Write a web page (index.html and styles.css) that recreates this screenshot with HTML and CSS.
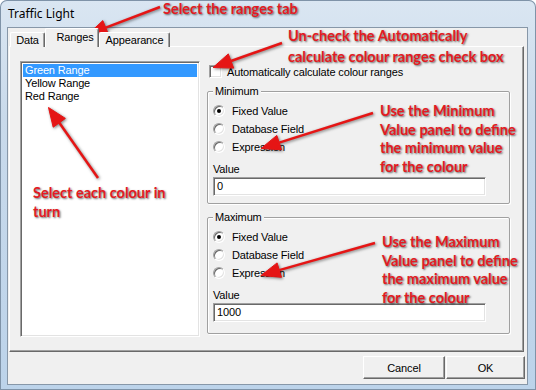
FILE: index.html
```html
<!DOCTYPE html>
<html lang="en">
<head>
    <meta charset="UTF-8">
    <title>Traffic Light</title>
    <link rel="stylesheet" href="styles.css">
</head>
<body>

    <div class="window">
        <div class="titlebar">Traffic Light</div>

        <div class="client">
            <!-- Tab strip -->
            <div class="tabs">
                <span class="tab tab-data">Data</span>
                <span class="tab tab-active">Ranges</span>
                <span class="tab tab-appearance">Appearance</span>
            </div>

            <div class="panel">
                <ul class="listbox">
                    <li class="selected">Green Range</li>
                    <li>Yellow Range</li>
                    <li>Red Range</li>
                </ul>

                <div class="settings">
                    <label class="check-row"><span class="checkbox"></span>Automatically calculate colour ranges</label>

                    <fieldset class="group">
                        <legend>Minimum</legend>
                        <div class="radio-row"><span class="radio checked"></span>Fixed Value</div>
                        <div class="radio-row"><span class="radio"></span>Database Field</div>
                        <div class="radio-row"><span class="radio"></span>Expression</div>
                        <div class="field-label">Value</div>
                        <div class="textbox">0</div>
                    </fieldset>

                    <fieldset class="group group-grow">
                        <legend>Maximum</legend>
                        <div class="radio-row"><span class="radio checked"></span>Fixed Value</div>
                        <div class="radio-row"><span class="radio"></span>Database Field</div>
                        <div class="radio-row"><span class="radio"></span>Expression</div>
                        <div class="field-label">Value</div>
                        <div class="textbox">1000</div>
                    </fieldset>
                </div>
            </div>

            <div class="buttons">
                <button class="btn btn-cancel">Cancel</button>
                <button class="btn btn-ok">OK</button>
            </div>
        </div>

        <!-- Callout arrows drawn over the dialog -->
        <svg class="arrows" width="536" height="390" viewBox="0 0 536 390">
            <g fill="#e51515" stroke="#e51515">
                <line x1="160" y1="7" x2="105.8" y2="27.6" stroke-width="2.5"/>
                <polygon points="88,34.5 102.8,20.6 108.6,34.6" stroke-width="1"/>

                <line x1="282" y1="43" x2="231" y2="61" stroke-width="2.5"/>
                <polygon points="213,67.5 228.3,53.9 233.7,68.1" stroke-width="1"/>

                <line x1="373" y1="113" x2="279.2" y2="142.6" stroke-width="2.5"/>
                <polygon points="261,148.5 276.8,135.4 281.6,149.8" stroke-width="1"/>

                <line x1="375" y1="243" x2="279.3" y2="270.1" stroke-width="2.5"/>
                <polygon points="261,275.5 277.1,262.9 281.5,277.3" stroke-width="1"/>

                <line x1="98" y1="178" x2="59.3" y2="122.8" stroke-width="2.5"/>
                <polygon points="48.5,107.5 65.4,118.4 53.2,127.2" stroke-width="1"/>
            </g>
        </svg>

        <div class="note note-tab">Select the ranges tab</div>
        <div class="note note-check">Un-check the Automatically<br>calculate colour ranges check box</div>
        <div class="note note-min">Use the Minimum<br>Value panel to define<br>the minimum value<br>for the colour</div>
        <div class="note note-max">Use the Maximum<br>Value panel to define<br>the maximum value<br>for the colour</div>
        <div class="note note-list">Select each colour in<br>turn</div>
    </div>

</body>
</html>
```

FILE: styles.css
```css
body {
    margin: 0;
    background-color: #ffffff;
    font-family: 'Liberation Sans', Arial, sans-serif;
    font-size: 11px;
    letter-spacing: -0.15px;
    color: #000000;
}
.window {
    position: relative;
    width: 536px;
    height: 390px;
    box-sizing: border-box;
    padding: 0 8px 5px 7px;
    background: linear-gradient(180deg, #dae6f2 0%, #c9daeb 30%, #bcd3ea 100%);
    border-radius: 7px 7px 0 0;
    box-shadow: inset 0 0 0 1px #7f93a8;
}
.titlebar {
    height: 27px;
    line-height: 28px;
    padding-left: 1px;
    font-family: 'Noto Sans', sans-serif;
    font-size: 12px;
    letter-spacing: 0;
    color: #000000;
}
.client {
    height: 358px;
    box-sizing: border-box;
    border: 1px solid #8797a8;
    background-color: #f0f0f0;
}

/* Tabs */
.tabs {
    display: flex;
    align-items: flex-end;
    height: 19px;
    margin-left: 2px;
    position: relative;
    z-index: 1;
}
.tab {
    height: 15px;
    line-height: 15px;
    box-sizing: border-box;
    border-top: 1px solid #ffffff;
    border-left: 1px solid #ffffff;
    border-right: 1px solid #696969;
    border-radius: 2px 2px 0 0;
    text-align: center;
    background-color: #f0f0f0;
    box-shadow: inset -1px 0 0 #a0a0a0;
}
.tab-data {
    width: 35px;
}
.tab-appearance {
    width: 71px;
}
.tab-active {
    width: 54px;
    height: 19px;
    line-height: 17px;
    padding-left: 6px;
}
.panel {
    display: flex;
    height: 306px;
    box-sizing: border-box;
    margin-top: -1px;
    margin-left: 1px;
    width: 515px;
    padding: 14px 0 0 10px;
    border-top: 1px solid #ffffff;
    border-left: 1px solid #ffffff;
    border-right: 1px solid #696969;
    border-bottom: 1px solid #696969;
    box-shadow: inset -1px -1px 0 #a0a0a0;
}

/* Sunken controls */
.listbox, .textbox, .checkbox, .radio {
    background-color: #ffffff;
    border: 1px solid;
    border-color: #a0a0a0 #ffffff #ffffff #a0a0a0;
    box-shadow: inset 1px 1px 0 #696969, inset -1px -1px 0 #e3e3e3;
    box-sizing: border-box;
}
.listbox {
    list-style: none;
    margin: 0;
    width: 180px;
    height: 276px;
    padding: 2px;
}
.listbox li {
    height: 13px;
    line-height: 13px;
    padding-left: 2px;
}
.listbox li.selected {
    background-color: #3399ff;
    color: #ffffff;
}
.settings {
    display: flex;
    flex-direction: column;
    width: 303px;
    height: 276px;
    margin-left: 7px;
}
.check-row {
    display: flex;
    align-items: center;
    height: 13px;
    margin: 4px 0 0 2px;
}
.checkbox {
    width: 13px;
    height: 13px;
    margin-right: 5px;
}

/* Group boxes */
.group {
    margin: 7px 0 0 0;
    padding: 5px 5px 7px 5px;
    border: 1px solid #a0a0a0;
    box-shadow: inset 1px 1px 0 #ffffff, 1px 1px 0 #ffffff;
    border-radius: 2px;
}
.group-grow {
    flex: 1;
    margin-bottom: 3px;
}
.group legend {
    padding: 0 2px;
    line-height: 12px;
    background-color: #f0f0f0;
}
.radio-row {
    display: flex;
    align-items: center;
    height: 18px;
}
.radio {
    position: relative;
    width: 12px;
    height: 12px;
    border-radius: 50%;
    margin-right: 7px;
}
.radio.checked::after {
    content: '';
    position: absolute;
    left: 3px;
    top: 3px;
    width: 4px;
    height: 4px;
    border-radius: 50%;
    background-color: #000000;
}
.field-label {
    margin-top: 7px;
    line-height: 12px;
}
.textbox {
    width: 273px;
    height: 19px;
    line-height: 17px;
    margin-top: 2px;
    padding-left: 3px;
}

/* Dialog buttons */
.buttons {
    display: flex;
    justify-content: flex-end;
    gap: 1px;
    margin: 4px 2px 0 0;
}
.btn {
    height: 23px;
    font-family: 'Liberation Sans', Arial, sans-serif;
    font-size: 11px;
    letter-spacing: -0.15px;
    background-color: #f0f0f0;
    border: 1px solid;
    border-color: #ffffff #696969 #696969 #ffffff;
    box-shadow: inset -1px -1px 0 #a0a0a0;
    padding: 0;
}
.btn-cancel {
    width: 82px;
}
.btn-ok {
    width: 79px;
}

/* Callouts */
.arrows {
    position: absolute;
    left: 0;
    top: 0;
    pointer-events: none;
    filter: drop-shadow(1px 1px 1.5px rgba(0, 0, 0, 0.5));
}
.note {
    position: absolute;
    font-family: Lato, 'Open Sans', sans-serif;
    font-weight: bold;
    font-size: 14.5px;
    line-height: 18.5px;
    letter-spacing: 0;
    color: #e31a22;
    text-shadow: 1px 1px 2px rgba(0, 0, 0, 0.6);
    white-space: nowrap;
}
.note-tab {
    left: 163px;
    top: 0;
}
.note-check {
    left: 288px;
    top: 26px;
    line-height: 20.5px;
}
.note-min {
    left: 380px;
    top: 102px;
}
.note-max {
    left: 382px;
    top: 233px;
}
.note-list {
    left: 33px;
    top: 184px;
}
```
